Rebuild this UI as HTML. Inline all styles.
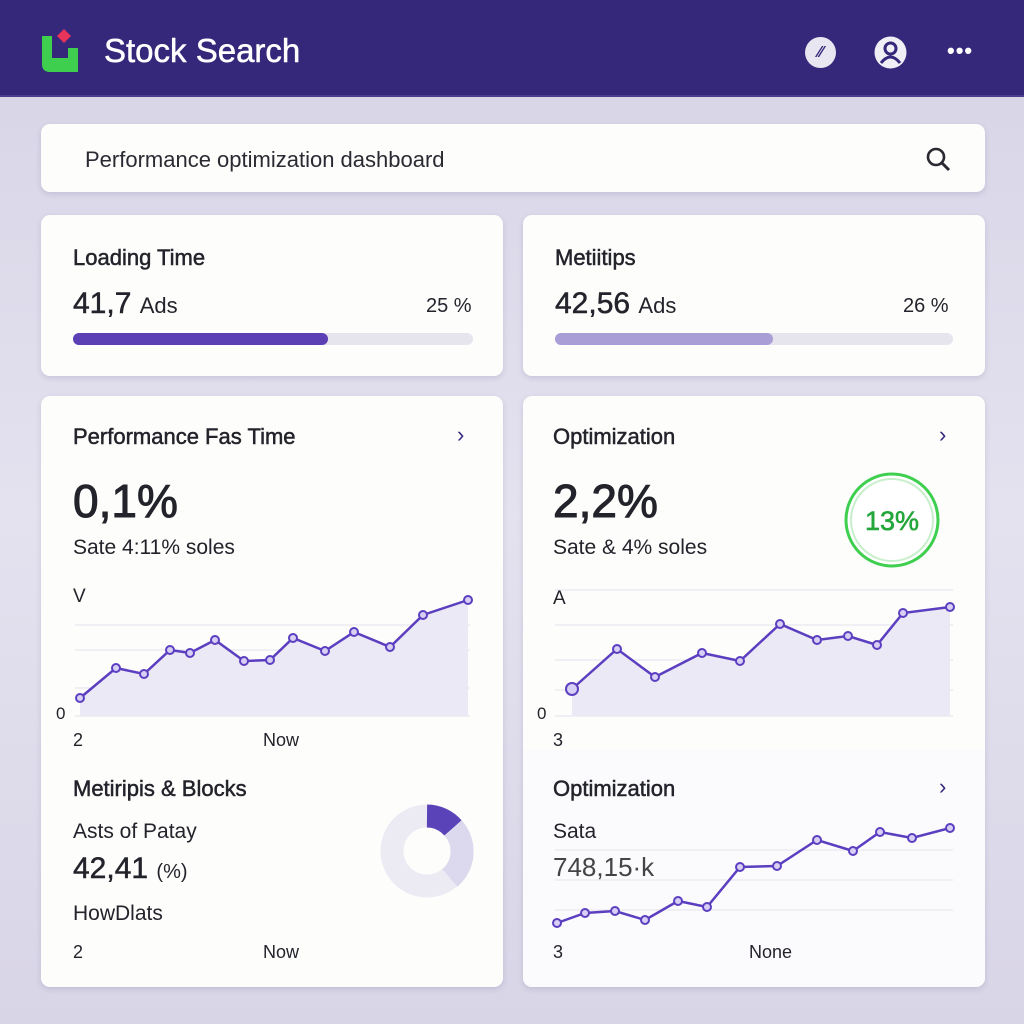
<!DOCTYPE html><html><head><style>
*{margin:0;padding:0;box-sizing:border-box}
body{width:1024px;height:1024px;background:linear-gradient(#d6d3e6,#e4e2ef 50%,#d8d5e7);font-family:"Liberation Sans",sans-serif;color:#23232b;position:relative;overflow:hidden}
.hdr{position:absolute;left:0;top:0;width:1024px;height:97px;background:#35277a;border-bottom:2px solid #4a3d8c}
.card{position:absolute;background:#fdfdfc;border-radius:9px;box-shadow:0 2px 6px rgba(60,50,110,.15)}
.t{position:absolute;white-space:nowrap}
.b{-webkit-text-stroke:0.5px currentColor}
.bb{-webkit-text-stroke:1px currentColor}
</style></head><body>
<div class="hdr">
<svg class="t" style="left:38px;top:26px" width="46" height="50" viewBox="0 0 46 50"><path d="M4 10h10v22h16v-10h10v24H12q-8 0-8-8z" fill="#3fcf4f"/><path d="M26 3l7 7-7 7-7-7z" fill="#e8335a"/></svg>
<div class="t b" style="left:104px;top:32px;font-size:33px;color:#fff">Stock Search</div>
<div class="t" style="left:805px;top:37px;width:31px;height:31px;border-radius:50%;background:#e8e6f0;color:#35277a;font-size:16px;text-align:center;line-height:31px;font-weight:bold">⁄⁄</div>
<svg class="t" style="left:874px;top:36px" width="33" height="33" viewBox="0 0 33 33"><circle cx="16.5" cy="16.5" r="16" fill="#f0eff5"/><circle cx="16.5" cy="12.5" r="5.5" fill="none" stroke="#35277a" stroke-width="3"/><path d="M7 27q9.5-12 19 0" fill="none" stroke="#35277a" stroke-width="3"/></svg>
<div class="t" style="left:947px;top:38px;font-size:22px;color:#fff;letter-spacing:1px;font-weight:bold">•••</div>
</div>
<div class="card" style="left:41px;top:124px;width:944px;height:68px">
<div class="t" style="left:44px;top:23px;font-size:22px;color:#2a2a32">Performance optimization dashboard</div>
<svg class="t" style="left:884px;top:22px" width="28" height="28" viewBox="0 0 28 28"><circle cx="11" cy="11" r="8" fill="none" stroke="#2a2a32" stroke-width="2.6"/><path d="M17 17l7 7" stroke="#2a2a32" stroke-width="3"/></svg>
</div>
<div class="card" style="left:41px;top:215px;width:462px;height:161px">
<div class="t b" style="left:32px;top:30px;font-size:22px">Loading Time</div>
<div class="t b" style="left:32px;top:72px;font-size:30px">41,7 <span style="font-size:22px;-webkit-text-stroke:0">Ads</span></div>
<div class="t" style="left:385px;top:80px;font-size:20px">25 %</div>
<div class="t" style="left:32px;top:118px;width:400px;height:12px;border-radius:6px;background:#e6e5ee"><div style="width:255px;height:12px;border-radius:6px;background:#5b3fb5"></div></div>
</div>
<div class="card" style="left:523px;top:215px;width:462px;height:161px">
<div class="t b" style="left:32px;top:30px;font-size:22px">Metiitips</div>
<div class="t b" style="left:32px;top:72px;font-size:30px">42,56 <span style="font-size:22px;-webkit-text-stroke:0">Ads</span></div>
<div class="t" style="left:380px;top:80px;font-size:20px">26 %</div>
<div class="t" style="left:32px;top:118px;width:398px;height:12px;border-radius:6px;background:#e6e5ee"><div style="width:218px;height:12px;border-radius:6px;background:#a99fd6"></div></div>
</div>
<div class="card" style="left:41px;top:396px;width:462px;height:591px">
<div class="t b" style="left:32px;top:28px;font-size:22px">Performance Fas Time</div>
<div class="t" style="left:416px;top:26px;font-size:22px;color:#35277a">›</div>
<div class="t bb" style="left:32px;top:78px;font-size:46px">0,1%</div>
<div class="t" style="left:32px;top:140px;font-size:21px">Sate 4:11% soles</div>
<div class="t" style="left:32px;top:190px;font-size:19px">V</div>
<div class="t" style="left:15px;top:308px;font-size:17px">0</div>
<div class="t" style="left:32px;top:334px;font-size:18px">2</div>
<div class="t" style="left:222px;top:334px;font-size:18px">Now</div>
<div class="t b" style="left:32px;top:380px;font-size:22px">Metiripis &amp; Blocks</div>
<div class="t" style="left:32px;top:424px;font-size:21px">Asts of Patay</div>
<div class="t b" style="left:32px;top:456px;font-size:30px">42,41 <span style="font-size:20px;-webkit-text-stroke:0">(%)</span></div>
<div class="t" style="left:32px;top:506px;font-size:21px">HowDlats</div>
<div class="t" style="left:32px;top:546px;font-size:18px">2</div>
<div class="t" style="left:222px;top:546px;font-size:18px">Now</div>
</div>
<div class="card" style="left:523px;top:396px;width:462px;height:591px">
<div style="position:absolute;left:0;top:354px;width:462px;height:237px;background:#fbfbfd;border-radius:0 0 9px 9px"></div>
<div class="t b" style="left:30px;top:28px;font-size:22px">Optimization</div>
<div class="t" style="left:416px;top:26px;font-size:22px;color:#35277a">›</div>
<div class="t bb" style="left:30px;top:78px;font-size:46px">2,2%</div>
<div class="t" style="left:30px;top:140px;font-size:21px">Sate &amp; 4% soles</div>
<div class="t" style="left:30px;top:192px;font-size:19px">A</div>
<div class="t" style="left:14px;top:308px;font-size:17px">0</div>
<div class="t" style="left:30px;top:334px;font-size:18px">3</div>
<div class="t b" style="left:30px;top:380px;font-size:22px">Optimization</div>
<div class="t" style="left:416px;top:378px;font-size:22px;color:#35277a">›</div>
<div class="t" style="left:30px;top:424px;font-size:21px">Sata</div>
<div class="t" style="left:30px;top:456px;font-size:26px;color:#444">748,15·k</div>
<div class="t" style="left:30px;top:546px;font-size:18px">3</div>
<div class="t" style="left:226px;top:546px;font-size:18px">None</div>
</div>
<svg class="t" style="left:0;top:0" width="1024" height="1024">
<g stroke="#e4e3ec" stroke-width="1"><path d="M75 625H470M75 650H470M75 688H470M75 716H470M555 590H953M555 625H953M555 660H953M555 690H953M555 716H953M555 850H953M555 880H953M555 910H953"/></g>
<path d="M80 698L116 668L144 674L170 650L190 653L215 640L244 661L270 660L293 638L325 651L354 632L390 647L423 615L468 600V716H80Z" fill="#ece9f6"/>
<path d="M80 698L116 668L144 674L170 650L190 653L215 640L244 661L270 660L293 638L325 651L354 632L390 647L423 615L468 600" fill="none" stroke="#5b3fc0" stroke-width="2.5"/>
<g fill="#d8d0f4" stroke="#5b3fc0" stroke-width="2"><circle cx="80" cy="698" r="4"/><circle cx="116" cy="668" r="4"/><circle cx="144" cy="674" r="4"/><circle cx="170" cy="650" r="4"/><circle cx="190" cy="653" r="4"/><circle cx="215" cy="640" r="4"/><circle cx="244" cy="661" r="4"/><circle cx="270" cy="660" r="4"/><circle cx="293" cy="638" r="4"/><circle cx="325" cy="651" r="4"/><circle cx="354" cy="632" r="4"/><circle cx="390" cy="647" r="4"/><circle cx="423" cy="615" r="4"/><circle cx="468" cy="600" r="4"/></g>
<path d="M572 689L617 649L655 677L702 653L740 661L780 624L817 640L848 636L877 645L903 613L950 607V716H572Z" fill="#ece9f6"/>
<path d="M572 689L617 649L655 677L702 653L740 661L780 624L817 640L848 636L877 645L903 613L950 607" fill="none" stroke="#5b3fc0" stroke-width="2.5"/>
<g fill="#d8d0f4" stroke="#5b3fc0" stroke-width="2"><circle cx="572" cy="689" r="6"/><circle cx="617" cy="649" r="4"/><circle cx="655" cy="677" r="4"/><circle cx="702" cy="653" r="4"/><circle cx="740" cy="661" r="4"/><circle cx="780" cy="624" r="4"/><circle cx="817" cy="640" r="4"/><circle cx="848" cy="636" r="4"/><circle cx="877" cy="645" r="4"/><circle cx="903" cy="613" r="4"/><circle cx="950" cy="607" r="4"/></g>
<path d="M557 923L585 913L615 911L645 920L678 901L707 907L740 867L777 866L817 840L853 851L880 832L912 838L950 828" fill="none" stroke="#5b3fc0" stroke-width="2.5"/>
<g fill="#d8d0f4" stroke="#5b3fc0" stroke-width="2"><circle cx="557" cy="923" r="4"/><circle cx="585" cy="913" r="4"/><circle cx="615" cy="911" r="4"/><circle cx="645" cy="920" r="4"/><circle cx="678" cy="901" r="4"/><circle cx="707" cy="907" r="4"/><circle cx="740" cy="867" r="4"/><circle cx="777" cy="866" r="4"/><circle cx="817" cy="840" r="4"/><circle cx="853" cy="851" r="4"/><circle cx="880" cy="832" r="4"/><circle cx="912" cy="838" r="4"/><circle cx="950" cy="828" r="4"/></g>
<circle cx="427" cy="851" r="35" fill="none" stroke="#ecebf3" stroke-width="23"/>
<path d="M427 816A35 35 0 0 1 453 828" fill="none" stroke="#5a42b8" stroke-width="23"/>
<path d="M453 828A35 35 0 0 1 450 878" fill="none" stroke="#dcd8ee" stroke-width="23"/>
<circle cx="892" cy="520" r="46" fill="#fff" stroke="#3fcf4f" stroke-width="3"/>
<circle cx="892" cy="520" r="41" fill="none" stroke="#c8efcb" stroke-width="2"/>
<text x="892" y="530" text-anchor="middle" font-family="Liberation Sans" font-size="27" fill="#24a63a" stroke="#24a63a" stroke-width="0.6">13%</text>
</svg>
</body></html>
